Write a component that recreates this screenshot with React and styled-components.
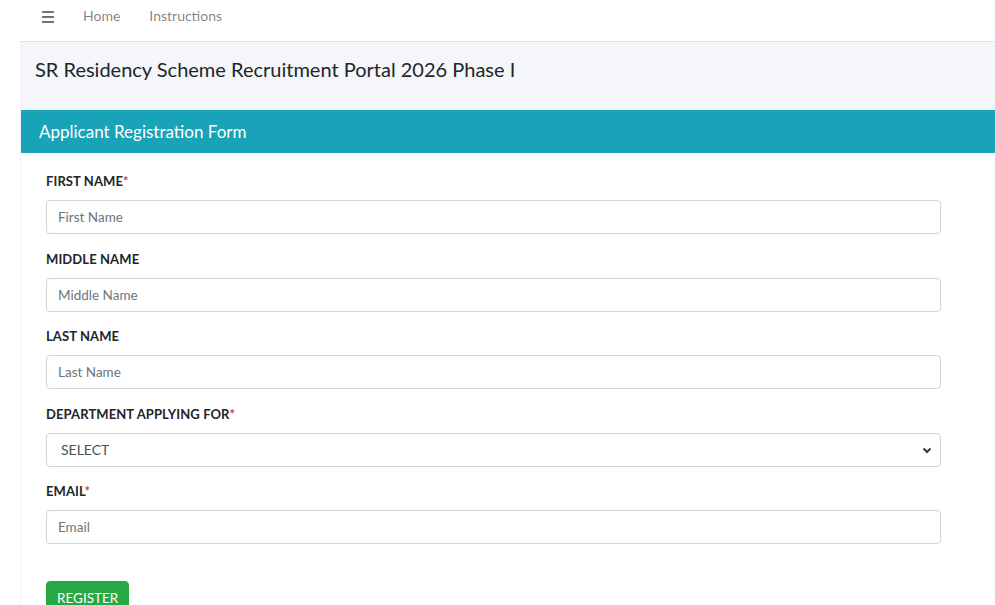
import React from "react";
import styled, { createGlobalStyle } from "styled-components";

const GlobalStyle = createGlobalStyle`
  html, body {
    margin: 0;
    padding: 0;
    background: #ffffff;
    font-family: Lato, "Liberation Sans", sans-serif;
    overflow: hidden;
  }
  * { box-sizing: border-box; }
`;

const Page = styled.div`
  display: flex;
  flex-direction: column;
  width: 995px;
  height: 605px;
  overflow: hidden;
`;

const Navbar = styled.nav`
  flex-shrink: 0;
  display: flex;
  align-items: flex-start;
  height: 42px;
  padding: 7px 0 0 42px;
  gap: 29px;
  position: relative;
  &::after {
    content: "";
    position: absolute;
    left: 20px;
    right: 0;
    bottom: 0;
    height: 1px;
    background: #dee2e6;
  }
`;

const NavLinks = styled.div`
  display: flex;
  gap: 29px;
`;

const NavLink = styled.a`
  color: rgba(0, 0, 0, 0.5);
  font-size: 14px;
  line-height: 17px;
  text-decoration: none;
`;

const Burger = styled.span`
  display: flex;
  flex-direction: column;
  gap: 3px;
  width: 12px;
  margin-top: 4px;
  span {
    height: 2px;
    background: #6c757d;
  }
`;

const Wrapper = styled.div`
  flex: 1;
  margin-left: 20px;
  display: flex;
  flex-direction: column;
  border-left: 1px solid #f1f3f5;
`;

const ContentHeader = styled.div`
  flex-shrink: 0;
  background: #f4f6f9;
  height: 68px;
  padding: 15px 0 0 14px;
`;

const Title = styled.h1`
  margin: 0;
  font-size: 20px;
  font-weight: 400;
  color: #212529;
`;

const Card = styled.section`
  flex: 1;
  background: #fff;
`;

const CardHeader = styled.div`
  background: #18a3b8;
  height: 43px;
  display: flex;
  align-items: center;
  padding-left: 18px;
  color: #fff;
  font-size: 17px;
`;

const CardBody = styled.div`
  padding: 20px 25px;
  width: 946px;
`;

const Group = styled.div`
  display: flex;
  flex-direction: column;
  gap: 11px;
  margin-bottom: 16.5px;
`;

const Label = styled.label`
  font-size: 13px;
  line-height: 16px;
  font-weight: 700;
  color: #212529;
  letter-spacing: 0.1px;
`;

const Req = styled.span`
  color: #dc3545;
`;

const Input = styled.input`
  height: 34px;
  width: 895px;
  border: 1px solid #ced4da;
  border-radius: 4px;
  padding: 0 11px;
  font-family: inherit;
  font-size: 13.5px;
  color: #495057;
  &::placeholder {
    color: #6c757d;
  }
`;

const Select = styled.div`
  height: 34px;
  width: 895px;
  border: 1px solid #ced4da;
  border-radius: 4px;
  padding: 0 8px 0 14px;
  display: flex;
  align-items: center;
  justify-content: space-between;
  font-size: 14px;
  color: #495057;
`;

const Button = styled.button`
  margin-top: 20px;
  background: #28a745;
  color: #fff;
  border: 1px solid #28a745;
  border-radius: 4px;
  font-family: inherit;
  font-size: 13.5px;
  height: 34px;
  padding: 0 10px;
`;

const fields = [
  { label: "FIRST NAME", req: true, ph: "First Name" },
  { label: "MIDDLE NAME", req: false, ph: "Middle Name" },
  { label: "LAST NAME", req: false, ph: "Last Name" },
];

export default function App() {
  return (
    <>
      <GlobalStyle />
      <Page>
        <Navbar>
          <Burger>
            <span />
            <span />
            <span />
          </Burger>
          <NavLinks>
            <NavLink href="#">Home</NavLink>
            <NavLink href="#">Instructions</NavLink>
          </NavLinks>
        </Navbar>
        <Wrapper>
          <ContentHeader>
            <Title>SR Residency Scheme Recruitment Portal 2026 Phase I</Title>
          </ContentHeader>
          <Card>
            <CardHeader>Applicant Registration Form</CardHeader>
            <CardBody>
              {fields.map((f) => (
                <Group key={f.label}>
                  <Label>
                    {f.label}
                    {f.req && <Req>*</Req>}
                  </Label>
                  <Input placeholder={f.ph} />
                </Group>
              ))}
              <Group>
                <Label>
                  DEPARTMENT APPLYING FOR<Req>*</Req>
                </Label>
                <Select>
                  SELECT
                  <svg width="10" height="8" viewBox="0 0 10 8">
                    <path d="M1.5 2.5 L5 6 L8.5 2.5" fill="none" stroke="#343a40" strokeWidth="2" />
                  </svg>
                </Select>
              </Group>
              <Group>
                <Label>
                  EMAIL<Req>*</Req>
                </Label>
                <Input placeholder="Email" />
              </Group>
              <Button>REGISTER</Button>
            </CardBody>
          </Card>
        </Wrapper>
      </Page>
    </>
  );
}
